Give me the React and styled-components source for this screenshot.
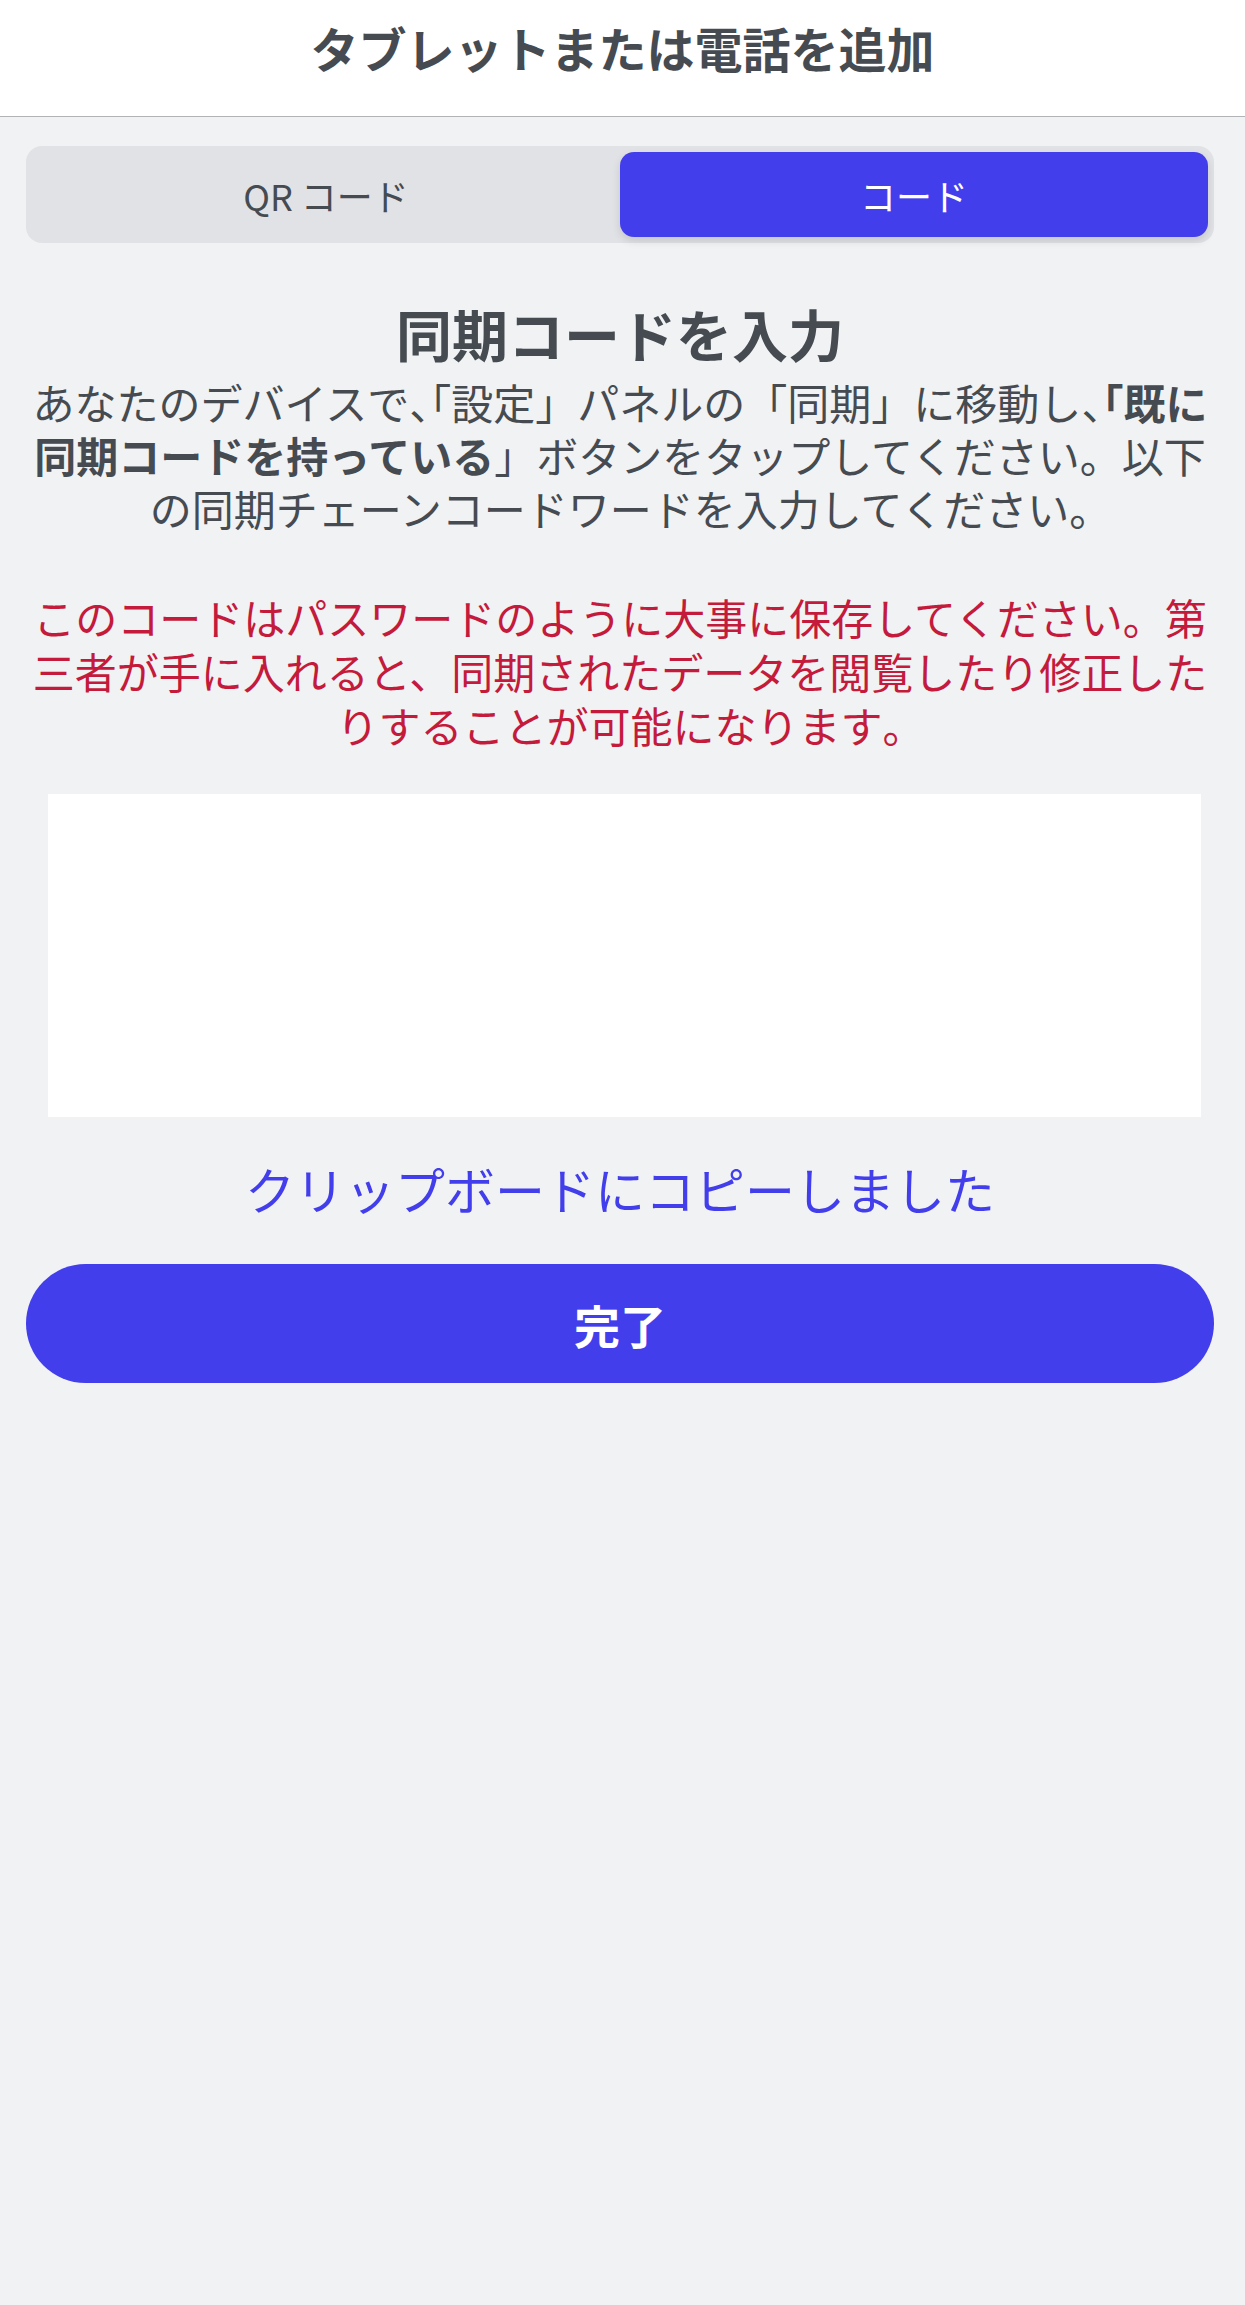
import React, { useState } from "react";
import styled, { createGlobalStyle } from "styled-components";

const GlobalStyle = createGlobalStyle`
  html, body {
    margin: 0;
    padding: 0;
    background: #f1f2f4;
  }
  body {
    font-family: "Noto Sans CJK JP", "Noto Sans", sans-serif;
    color: #454b51;
  }
`;

const Page = styled.div`
  min-height: 2305px;
  background: #f1f2f4;
`;

const Header = styled.header`
  height: 117px;
  background: #ffffff;
  border-bottom: 1px solid #b1b3b6;
  display: flex;
  justify-content: center;
  padding-top: 17px;
  box-sizing: border-box;

  h1 {
    margin: 0;
    font-size: 48px;
    line-height: 60px;
    font-weight: 700;
    color: #454b51;
  }
`;

const Main = styled.main`
  padding: 29px 31px 0 26px;
  display: flex;
  flex-direction: column;
`;

const Tabs = styled.div`
  display: flex;
  height: 97px;
  padding: 6px;
  box-sizing: border-box;
  border-radius: 16px;
  background: #e1e2e5;
`;

const Tab = styled.button`
  flex: 1;
  border: none;
  border-radius: 14px;
  font-family: inherit;
  font-size: 36px;
  font-weight: 400;
  cursor: pointer;
  background: ${(p) => (p.$active ? "#433eeb" : "transparent")};
  color: ${(p) => (p.$active ? "#ffffff" : "#454b51")};
  box-shadow: ${(p) => (p.$active ? "0 4px 8px rgba(0, 0, 0, 0.12)" : "none")};
`;

const Heading = styled.h2`
  margin: 57px 0 0;
  text-align: center;
  font-size: 56px;
  line-height: 65px;
  font-weight: 700;
  color: #454b51;
`;

const Body = styled.p`
  margin: ${(p) => p.$top || "0"} -14px 0;
  text-align: center;
  white-space: nowrap;
  font-size: 42px;
  line-height: ${(p) => (p.$warn ? "54px" : "53px")};
  color: ${(p) => (p.$warn ? "#c41a3b" : "#454b51")};

  b {
    font-weight: 700;
  }
`;

// half-width punctuation where the reference squeezes it
const Tight = styled.span`
  font-feature-settings: "halt" 1;
`;

const CodeBox = styled.div`
  margin: 42px 13px 0 22px;
  height: 323px;
  background: #ffffff;
`;

const Copied = styled.div`
  margin-top: 41px;
  text-align: center;
  font-size: 50px;
  line-height: 60px;
  color: #433eeb;
`;

const DoneButton = styled.button`
  margin-top: 46px;
  height: 119px;
  border: none;
  border-radius: 60px;
  background: #433eeb;
  color: #ffffff;
  font-family: inherit;
  font-size: 46px;
  font-weight: 700;
  cursor: pointer;
`;

export default function App() {
  const [tab, setTab] = useState("code");

  return (
    <Page>
      <GlobalStyle />
      <Header>
        <h1>タブレットまたは電話を追加</h1>
      </Header>
      <Main>
        <Tabs>
          <Tab $active={tab === "qr"} onClick={() => setTab("qr")}>
            QR コード
          </Tab>
          <Tab $active={tab === "code"} onClick={() => setTab("code")}>
            コード
          </Tab>
        </Tabs>
        <Heading>同期コードを入力</Heading>
        <Body $top="10px">
          あなたのデバイスで<Tight>、</Tight>「設定」パネルの「同期」に移動し
          <Tight>、</Tight>
          <b>「既に</b>
          <br />
          <b>同期コードを持っている</b>」ボタンをタップしてください。以下
          <br />
          の同期チェーンコードワードを入力してください<Tight>。</Tight>
        </Body>
        <Body $warn $top="56px">
          このコードはパスワードのように大事に保存してください。第
          <br />
          三者が手に入れると、同期されたデータを閲覧したり修正した
          <br />
          りすることが可能になります<Tight>。</Tight>
        </Body>
        <CodeBox />
        <Copied>クリップボードにコピーしました</Copied>
        <DoneButton>完了</DoneButton>
      </Main>
    </Page>
  );
}
